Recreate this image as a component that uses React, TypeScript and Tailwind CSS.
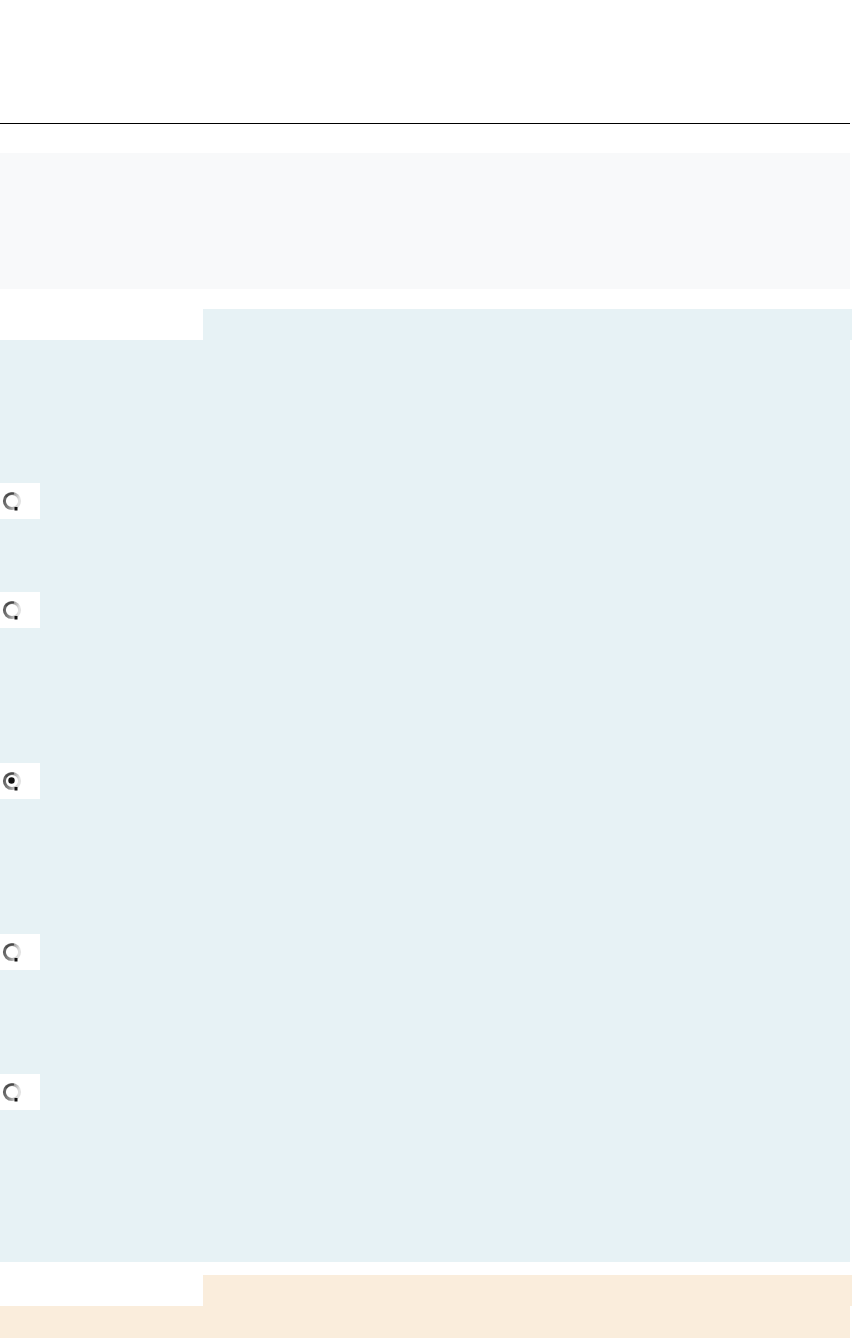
import React from "react";

function Radio({ checked }: { checked?: boolean }) {
  const id = checked ? "rg1" : "rg0";
  return (
    <div className="w-[40px] h-[36px] bg-white flex items-center">
      <svg width="22" height="22" viewBox="0 0 22 22" className="ml-[1px]">
        <defs>
          <linearGradient id={id} x1="0" y1="0" x2="1" y2="0.2">
            <stop offset="0" stopColor="#5a5a5a" />
            <stop offset="0.5" stopColor="#8c8c8c" />
            <stop offset="1" stopColor="#e2e2e2" />
          </linearGradient>
        </defs>
        <circle cx="11" cy="11" r="7.6" fill="#ffffff" stroke={`url(#${id})`} strokeWidth="3" />
        <path d="M5 7 A7.6 7.6 0 0 1 13 3.6" stroke="#4a4a4a" strokeWidth="2" fill="none" />
        <rect x="13.5" y="17" width="3" height="3.5" fill="#111" />
        {checked && <circle cx="10.5" cy="10.5" r="3.2" fill="#111" />}
      </svg>
    </div>
  );
}

export default function App() {
  return (
    <div className="w-[852px] h-[1338px] overflow-hidden bg-white flex flex-col pt-[123px]">
      <div className="w-[850px] h-px bg-black" />
      <div className="w-[850px] h-[136px] mt-[29px] bg-[#f8f9fa]" />
      <div className="ml-[203px] w-[649px] h-[31px] mt-[20px] bg-[#e7f2f5]" />
      <div className="w-[850px] h-[922px] bg-[#e7f2f5] flex flex-col">
        <div className="mt-[143px]">
          <Radio />
        </div>
        <div className="mt-[73px]">
          <Radio />
        </div>
        <div className="mt-[135px]">
          <Radio checked />
        </div>
        <div className="mt-[135px]">
          <Radio />
        </div>
        <div className="mt-[104px]">
          <Radio />
        </div>
      </div>
      <div className="ml-[203px] w-[649px] h-[31px] mt-[13px] bg-[#faeddc]" />
      <div className="w-[850px] h-[32px] bg-[#faeddc]" />
    </div>
  );
}
